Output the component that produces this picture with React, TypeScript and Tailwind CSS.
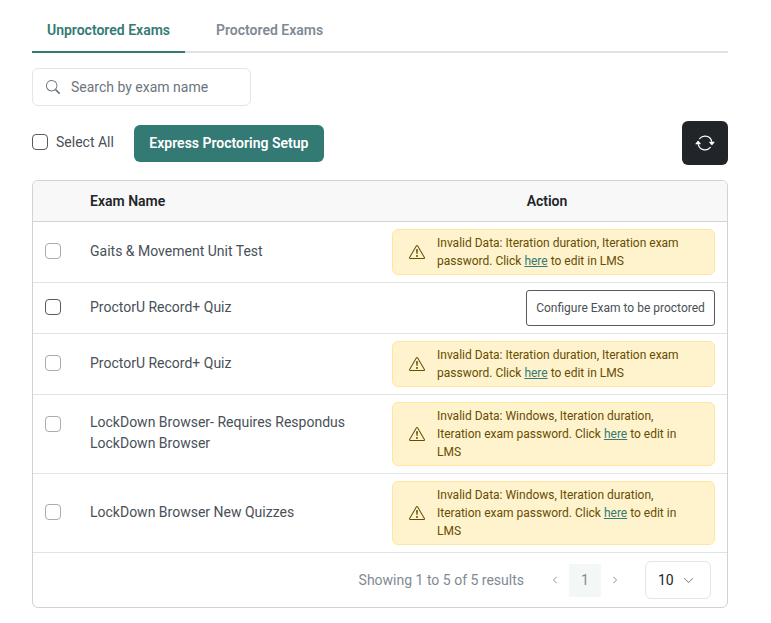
import React from "react";
import { BsArrowRepeat, BsExclamationTriangle, BsSearch, BsChevronLeft, BsChevronRight, BsChevronDown } from "react-icons/bs";

const Alert = ({ text }: { text: string }) => (
  <div className="w-[323px] rounded-md border border-[#ffe69c] bg-[#fff3cd] pl-[16px] pr-4 py-[4px] flex items-center gap-[12px] text-[12px] leading-[18px] text-[#664d03]">
    <BsExclamationTriangle size={16} className="shrink-0" />
    <div>
      {text}
      <a className="text-[#337a75] underline">here</a>
      {" to edit in LMS"}
    </div>
  </div>
);

const Box = ({ dark }: { dark?: boolean }) => (
  <span className={`block w-4 h-4 rounded-[4px] border bg-white ${dark ? "border-[#555b61]" : "border-[#a8acb0]"}`} />
);

const Row = ({ name, dark, children, h, boxPad = "pb-[2px]" }: { name: React.ReactNode; dark?: boolean; children: React.ReactNode; h: string; boxPad?: string }) => (
  <div className={`flex items-center border-b border-[#e2e3e5] ${h}`}>
    <div className={`w-[57px] pl-3 shrink-0 ${boxPad}`}><Box dark={dark} /></div>
    <div className="flex-1 text-[14px] leading-[21px] text-[#495057] pb-[2px]">{name}</div>
    <div className="pr-3 shrink-0">{children}</div>
  </div>
);

export default function App() {
  return (
    <div className="w-[771px] h-[623px] bg-white overflow-hidden font-['Roboto',sans-serif]">
      <div className="ml-[32px] w-[696px]">
        <div className="flex h-[53px] border-b-2 border-[#dee2e6] pt-[20px]">
          <div className="w-[153px] -mb-[2px] h-[33px] border-b-2 border-[#337a75] text-center text-[14px] leading-[21px] font-semibold text-[#337a75]">Unproctored Exams</div>
          <div className="ml-[31px] text-[14px] leading-[21px] font-semibold text-[#7f8a94]">Proctored Exams</div>
        </div>

        <div className="mt-[15px] w-[219px] h-[38px] rounded-md border border-[#e2e4e8] flex items-center pl-[13px] gap-[11px]">
          <BsSearch size={14} color="#6c757d" />
          <span className="text-[14px] text-[#6c757d]">Search by exam name</span>
        </div>

        <div className="mt-[15px] h-[44px] flex items-center">
          <div className="flex items-center pb-[2px]">
            <span className="w-4 h-4 rounded-[4px] border border-[#555b61] bg-white" />
            <span className="ml-2 text-[14px] text-[#495057]">Select All</span>
          </div>
          <button className="ml-[20px] h-[37px] w-[190px] rounded-md bg-[#337a75] text-white text-[14px] font-semibold">Express Proctoring Setup</button>
          <button className="ml-auto w-[46px] h-[44px] rounded-md bg-[#212529] flex items-center justify-center">
            <BsArrowRepeat size={20} color="white" />
          </button>
        </div>

        <div className="mt-[15px] w-[696px] h-[428px] rounded-md border border-[#d0d2d4] overflow-hidden">
          <div className="flex items-center h-[41px] bg-[#f8f8f8] border-b border-[#d0d2d4] text-[14px] font-semibold text-[#212529]">
            <div className="w-[57px]" />
            <div className="flex-1">Exam Name</div>
            <div className="w-[336px] text-center pr-[24px]">Action</div>
          </div>
          <Row name="Gaits & Movement Unit Test" h="h-[61px]">
            <Alert text="Invalid Data: Iteration duration, Iteration exam password. Click " />
          </Row>
          <Row name="ProctorU Record+ Quiz" dark h="h-[51px]">
            <div className="w-[189px] h-[36px] rounded-[3px] border border-[#555b61] flex items-center justify-center text-[12px] text-[#495057]">Configure Exam to be proctored</div>
          </Row>
          <Row name="ProctorU Record+ Quiz" h="h-[61px]">
            <Alert text="Invalid Data: Iteration duration, Iteration exam password. Click " />
          </Row>
          <Row name={<>LockDown Browser- Requires Respondus<br />LockDown Browser</>} h="h-[79px]" boxPad="pb-[21px]">
            <Alert text="Invalid Data: Windows, Iteration duration, Iteration exam password. Click " />
          </Row>
          <Row name="LockDown Browser New Quizzes" h="h-[79px]">
            <Alert text="Invalid Data: Windows, Iteration duration, Iteration exam password. Click " />
          </Row>
          <div className="flex items-center h-[54px] justify-end pr-4">
            <span className="text-[14px] text-[#7f8a94]">Showing 1 to 5 of 5 results</span>
            <BsChevronLeft size={8} color="#6c757d" className="ml-[27px]" />
            <span className="ml-[10px] w-8 h-[33px] bg-[#f3f8f7] flex items-center justify-center text-[14px] text-[#7f8a94]">1</span>
            <BsChevronRight size={8} color="#6c757d" className="ml-[10px]" />
            <div className="ml-[26px] w-[66px] h-[38px] rounded-md border border-[#e2e4e8] flex items-center pl-3 gap-[9px] text-[14px] text-[#212529]">
              10
              <BsChevronDown size={11} color="#6c757d" />
            </div>
          </div>
        </div>
      </div>
    </div>
  );
}
